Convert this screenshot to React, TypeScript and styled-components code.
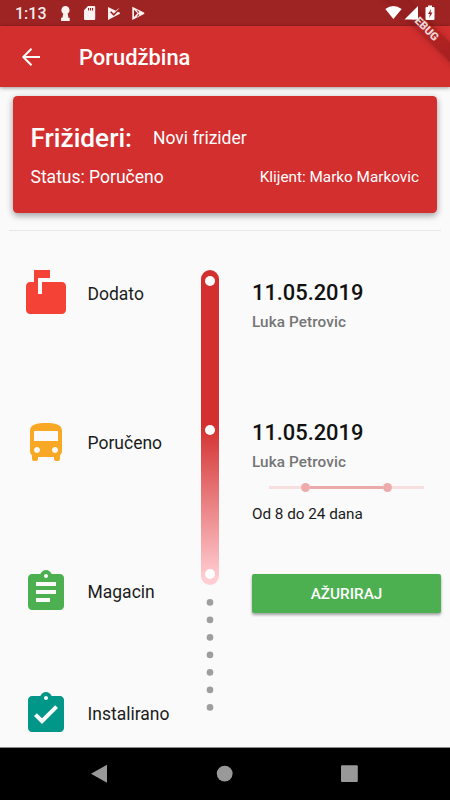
import React from 'react';
import styled, { createGlobalStyle } from 'styled-components';

const GlobalStyle = createGlobalStyle`
  * { box-sizing: border-box; }
  body { margin: 0; background: #fafafa; font-family: Roboto, sans-serif; }
`;

const Screen = styled.div`
  position: relative;
  width: 450px;
  height: 800px;
  display: flex;
  flex-direction: column;
  overflow: hidden;
  background: #fafafa;
`;

const StatusBar = styled.header`
  flex: none;
  height: 26px;
  padding: 0 14px 0 15px;
  display: flex;
  align-items: center;
  justify-content: space-between;
  background: #9e2323;
  color: #fff;
`;

const Clock = styled.span`
  width: 45px;
  padding-top: 2px;
  font-size: 16px;
  line-height: 24px;
  font-weight: 500;
  color: #f9eeee;
`;

const StatusGroup = styled.div`
  display: flex;
  align-items: center;
`;

const SignalGroup = styled(StatusGroup)`
  position: relative;
  z-index: 2;
`;

const AppBar = styled.div`
  flex: none;
  height: 61px;
  padding-left: 20px;
  display: flex;
  align-items: center;
  background: #d32f2f;
  box-shadow: 0 1px 4px rgba(0, 0, 0, 0.4);
`;

const Title = styled.h1`
  margin: 2px 0 0 36px;
  font-size: 21.9px;
  line-height: 28px;
  font-weight: 500;
  color: #fff;
`;

const DebugBanner = styled.div`
  position: absolute;
  z-index: 1;
  top: 19.5px;
  right: -29px;
  width: 110px;
  height: 13px;
  transform: rotate(45deg);
  background: linear-gradient(90deg, rgba(130, 18, 18, 0.1), rgba(130, 18, 18, 0.6));
  box-shadow: 0 0 6px rgba(70, 0, 0, 0.35);
  color: #eed5d5;
  font-size: 11.2px;
  line-height: 13px;
  font-weight: 900;
  text-align: center;
`;

const Card = styled.section`
  flex: none;
  height: 117px;
  margin: 9px 13px 17px;
  padding: 26px 18px 0 17.5px;
  border-radius: 4.4px;
  background: #d32f2f;
  box-shadow: 0 3px 6px rgba(0, 0, 0, 0.28), 0 1px 9px rgba(0, 0, 0, 0.12);
  color: #fff;
`;

const CardRow = styled.div<{ $split?: boolean }>`
  display: flex;
  align-items: center;
  height: ${p => (p.$split ? 48 : 31)}px;
  justify-content: ${p => (p.$split ? 'space-between' : 'flex-start')};
`;

const CardText = styled.span<{ $size: number; $weight?: number; $gap?: number }>`
  font-size: ${p => p.$size}px;
  font-weight: ${p => p.$weight ?? 400};
  margin-left: ${p => p.$gap ?? 0}px;
  white-space: nowrap;
`;

const Divider = styled.hr`
  flex: none;
  width: 432px;
  height: 1px;
  margin: 0 9px;
  border: 0;
  background: #e8e8e8;
`;

const Body = styled.main`
  flex: 1;
  min-height: 0;
  display: grid;
  grid-template-columns: 179px 18px 223px;
  padding: 39px 0 0 22px;
  border-bottom: 1px solid #8c8c8c;
`;

const Steps = styled.div`
  display: grid;
  grid-template-rows: 149px 149px 122px 48px;
`;

const Step = styled.div`
  height: 48px;
  display: flex;
  align-items: center;
  gap: 17.5px;
`;

const Label = styled.span`
  font-size: 17.5px;
  color: #1c1c1c;
`;

const Rail = styled.div`
  width: 18px;
`;

const Track = styled.div`
  width: 18px;
  height: 315px;
  padding-top: 6px;
  border-radius: 9px;
  display: flex;
  flex-direction: column;
  align-items: center;
  background: linear-gradient(#d32f2f 0 49%, #ffcdd2 98%);
`;

const Knob = styled.i<{ $after?: number }>`
  flex: none;
  width: 10px;
  height: 10px;
  margin-bottom: ${p => p.$after ?? 0}px;
  border: 0.3px solid transparent;
  border-radius: 50%;
  background: #fff;
`;

const DotTrail = styled.svg`
  display: block;
  width: 18px;
  height: 130px;
  fill: #9e9e9e;
`;

const Details = styled.div`
  margin-left: 33px;
  width: 189px;
  display: flex;
  flex-direction: column;
`;

const Entry = styled.div<{ $height: number }>`
  height: ${p => p.$height}px;
  padding-top: 8px;
`;

const DateText = styled.div`
  font-size: 21.9px;
  line-height: 30px;
  font-weight: 500;
  letter-spacing: -0.04px;
  color: #111;
`;

const Person = styled.div`
  padding-top: 4px;
  font-size: 15.3px;
  line-height: 20px;
  font-weight: 500;
  letter-spacing: 0.1px;
  color: #757575;
`;

const Slider = styled.div`
  display: flex;
  align-items: center;
  width: 155px;
  height: 9px;
  margin: 11px 0 0 17px;
`;

const SliderPart = styled.i<{ $width: number; $active?: boolean }>`
  width: ${p => p.$width}px;
  height: ${p => (p.$active ? 3 : 2.2)}px;
  background: ${p => (p.$active ? '#eba9a9' : '#f8dfdf')};
`;

const Thumb = styled.i`
  width: 9px;
  height: 9px;
  border-radius: 50%;
  background: #edabab;
`;

const Range = styled.div`
  margin-top: 12px;
  font-size: 15.3px;
  line-height: 20px;
  letter-spacing: -0.03px;
  color: #1c1c1c;
`;

const Button = styled.button`
  width: 189px;
  height: 39px;
  padding: 0;
  border: 0;
  border-radius: 2px;
  background: #4caf50;
  box-shadow: 0 2px 3px rgba(0, 0, 0, 0.36);
  color: #fff;
  font: 500 15.3px Roboto, sans-serif;
`;

const NavBar = styled.nav`
  flex: none;
  height: 52px;
  padding: 0 92px 0 91px;
  display: flex;
  align-items: center;
  justify-content: space-between;
  background: #000;
`;

const StepIcon = ({ color, d }: { color: string; d: string }) => (
  <svg width="48" height="48" viewBox="0 0 24 24" fill={color}>
    <path d={d} />
  </svg>
);

const steps = [
  {
    label: 'Dodato',
    color: '#f44336',
    d: 'M20 6H10v6H8V4h6V0H6v6H4c-1.1 0-2 .9-2 2v12c0 1.1.9 2 2 2h16c1.1 0 2-.9 2-2V8c0-1.1-.9-2-2-2z',
  },
  {
    label: 'Poručeno',
    color: '#f9a825',
    d: 'M4 16c0 .88.39 1.67 1 2.22V20c0 .55.45 1 1 1h1c.55 0 1-.45 1-1v-1h8v1c0 .55.45 1 1 1h1c.55 0 1-.45 1-1v-1.78c.61-.55 1-1.34 1-2.22V6c0-3.5-3.58-4-8-4s-8 .5-8 4v10zm3.5 1c-.83 0-1.5-.67-1.5-1.5S6.67 14 7.5 14s1.5.67 1.5 1.5S8.33 17 7.5 17zm9 0c-.83 0-1.5-.67-1.5-1.5s.67-1.5 1.5-1.5 1.5.67 1.5 1.5-.67 1.5-1.5 1.5zm1.5-6H6V6h12v5z',
  },
  {
    label: 'Magacin',
    color: '#4caf50',
    d: 'M19 3h-4.18C14.4 1.84 13.3 1 12 1c-1.3 0-2.4.84-2.82 2H5c-1.1 0-2 .9-2 2v14c0 1.1.9 2 2 2h14c1.1 0 2-.9 2-2V5c0-1.1-.9-2-2-2zm-7 0c.55 0 1 .45 1 1s-.45 1-1 1-1-.45-1-1 .45-1 1-1zm2 14H7v-2h7v2zm3-4H7v-2h10v2zm0-4H7V7h10v2z',
  },
  {
    label: 'Instalirano',
    color: '#009688',
    d: 'M19 3h-4.18C14.4 1.84 13.3 1 12 1c-1.3 0-2.4.84-2.82 2H5c-1.1 0-2 .9-2 2v14c0 1.1.9 2 2 2h14c1.1 0 2-.9 2-2V5c0-1.1-.9-2-2-2zm-7 0c.55 0 1 .45 1 1s-.45 1-1 1-1-.45-1-1 .45-1 1-1zm-2 14l-4-4 1.41-1.41L10 14.17l6.59-6.59L18 9l-8 8z',
  },
];

const NotificationIcons = () => (
  <svg width="86" height="16" viewBox="60 5 86 16" fill="#fbf2f2">
    <path d="M65.5 6a4.1 4.1 0 0 1 2.2 7.5l.7 4.2h1.3V21h-8.6v-3.3h1.3l.8-4.2A4.1 4.1 0 0 1 65.5 6z" />
    <path
      fillRule="evenodd"
      d="M88 6h6.2q1 0 1 1v12q0 1-1 1H85q-1 0-1-1v-8.8zM88 8v2.6h1.1V8zm2 0v2.6h1.1V8zm2 0v2.6h1.1V8z"
    />
    <path d="M108 7l11.5 5.4q1.3.7 0 1.5L108 20z" />
    <path d="M110.700 11.600l3 3 6.200-6.200" fill="none" stroke="#9e2323" strokeWidth="1.9" />
    <path d="M111.500 11l2.300 2.300 4.800-4.800" fill="none" stroke="#fbf2f2" strokeWidth="0.8" />
    <path
      fillRule="evenodd"
      d="M132.300 6.800L144 12.500q1 .7 0 1.500l-11.700 5.900zM134 9.800v7.300l3.500-3.800zm2.300-.4l3 2.600-1 .9zM138.400 14l1 .9-3 2.500z"
    />
  </svg>
);

const SignalIcons = () => (
  <svg width="51" height="16" viewBox="385 5 51 16" fill="#fff">
    <path d="M385.300 9Q393.300 2.800 401.700 9L393.400 19z" />
    <path d="M404.500 19.500L418 6v13.500z" />
    <path
      fillRule="evenodd"
      d="M426.500 7h1.500V5.500h4V7h1.500q1 0 1 1v11q0 1-1 1h-7q-1 0-1-1V8q0-1 1-1zm4.500 2l-3 5h1.800l-.5 4 3.200-5.500h-2z"
    />
  </svg>
);

export default function App() {
  return (
    <>
      <GlobalStyle />
      <Screen>
        <StatusBar>
          <StatusGroup>
            <Clock>1:13</Clock>
            <NotificationIcons />
          </StatusGroup>
          <SignalGroup>
            <SignalIcons />
          </SignalGroup>
        </StatusBar>
        <AppBar>
          <svg width="23" height="22" viewBox="0 0 23 22" fill="none" stroke="#fff" strokeWidth="2">
            <path d="M20 11H4M11.500 2.800L3.300 11l8.200 8.200" />
          </svg>
          <Title>Porudžbina</Title>
        </AppBar>
        <DebugBanner>DEBUG</DebugBanner>
        <Card>
          <CardRow>
            <CardText $size={26.2} $weight={500}>Frižideri:</CardText>
            <CardText $size={17.5} $gap={21}>Novi frizider</CardText>
          </CardRow>
          <CardRow $split>
            <CardText $size={17.5}>Status: Poručeno</CardText>
            <CardText $size={15.3}>Klijent: Marko Markovic</CardText>
          </CardRow>
        </Card>
        <Divider />
        <Body>
          <Steps>
            {steps.map(s => (
              <Step key={s.label}>
                <StepIcon color={s.color} d={s.d} />
                <Label>{s.label}</Label>
              </Step>
            ))}
          </Steps>
          <Rail>
            <Track>
              <Knob $after={139} />
              <Knob $after={134} />
              <Knob />
            </Track>
            <DotTrail viewBox="0 0 18 130">
              {Array.from({ length: 7 }, (_, i) => (
                <circle key={i} cx="9" cy={17.4 + i * 17.5} r="3.3" />
              ))}
            </DotTrail>
          </Rail>
          <Details>
            <Entry $height={140}>
              <DateText>11.05.2019</DateText>
              <Person>Luka Petrovic</Person>
            </Entry>
            <Entry $height={164}>
              <DateText>11.05.2019</DateText>
              <Person>Luka Petrovic</Person>
              <Slider>
                <SliderPart $width={31.5} />
                <Thumb />
                <SliderPart $width={73.5} $active />
                <Thumb />
                <SliderPart $width={32} />
              </Slider>
              <Range>Od 8 do 24 dana</Range>
            </Entry>
            <Button>AŽURIRAJ</Button>
          </Details>
        </Body>
        <NavBar>
          <svg width="267" height="20" viewBox="91 764 267 20" fill="#999">
            <path d="M91 773.700L107 764.800v18z" />
            <circle cx="224.700" cy="773.600" r="7.900" />
            <rect x="341" y="765.300" width="16.800" height="16.800" rx="1" />
          </svg>
        </NavBar>
      </Screen>
    </>
  );
}
